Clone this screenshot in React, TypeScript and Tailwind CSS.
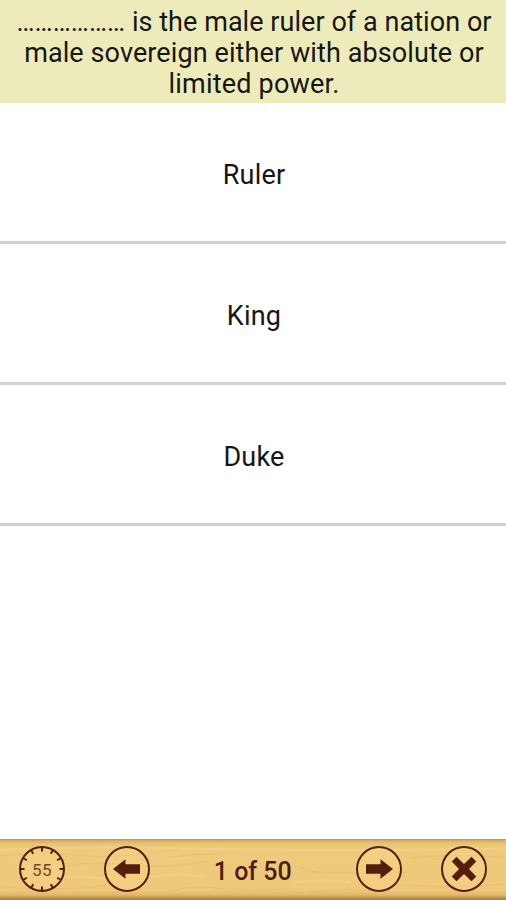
import type { ReactNode } from "react";

const question = [
  { text: "……………… is the male ruler of a nation or", spacing: "tracking-[0.05px]" },
  { text: "male sovereign either with absolute or", spacing: "tracking-[0.1px]" },
  { text: "limited power.", spacing: "tracking-[0.2px]" },
];

const answers = ["Ruler", "King", "Duke"];

const ticks = Array.from({ length: 12 }, (_, i) => i * 30);

function RoundIcon({ label, children }: { label: string; children: ReactNode }) {
  return (
    <button aria-label={label} className="block h-[48px] w-[48px] shrink-0">
      <svg viewBox="0 0 48 48" className="block h-full w-full text-[#551e0c]" fill="currentColor">
        <circle cx="24" cy="24" r="22" fill="#f8d488" fillOpacity="0.45" stroke="currentColor" strokeWidth="2" />
        {children}
      </svg>
    </button>
  );
}

function WoodGrain() {
  return (
    <svg className="absolute inset-0 h-full w-full" viewBox="0 0 506 61" preserveAspectRatio="none" fill="none" aria-hidden="true">
      <g stroke="#e4a24f" strokeWidth="1.2" opacity="0.25">
        <path d="M0 17 Q40 12 75 16 T170 12" />
        <path d="M65 27 Q95 22 125 26 T210 22" />
        <path d="M170 18 Q200 14 225 15" />
        <path d="M298 27 Q310 34 330 34 T410 33" />
        <path d="M170 52 Q195 46 215 49 T300 50" />
        <path d="M310 53 Q350 48 385 53" />
        <path d="M410 19 Q450 15 506 18" />
        <path d="M395 46 Q450 50 506 45" />
        <path d="M0 48 Q50 52 105 47" />
      </g>
      <g stroke="#ffe3a0" strokeWidth="2" opacity="0.3">
        <path d="M0 11 Q80 7 170 9 T350 11 T506 9" />
        <path d="M60 39 Q80 36 105 40" />
        <path d="M150 38 Q180 33 205 38" />
        <path d="M295 43 Q320 40 350 43" />
      </g>
    </svg>
  );
}

export default function App() {
  return (
    <div className="flex h-[900px] w-[506px] flex-col overflow-hidden bg-white font-[Roboto,sans-serif] text-[27px] text-[#161612]">
      <header className="h-[103px] shrink-0 bg-[#eeebba] pt-[7px] text-center leading-[31px]">
        {question.map((line) => (
          <div key={line.text} className={`whitespace-nowrap pl-[2px] ${line.spacing}`}>{line.text}</div>
        ))}
      </header>
      <main className="flex-1">
        {answers.map((answer) => (
          <button key={answer} className="flex h-[141px] w-full items-center justify-center border-b-[3px] border-[#dacfc7] pt-[6px] pl-[2px] tracking-[0.2px]">
            {answer}
          </button>
        ))}
      </main>
      <footer className="relative h-[61px] shrink-0 bg-[linear-gradient(to_bottom,#b99352_0px,#dab268_2px,#ebc576_5px,#efca7c_12px,#efc97a_51px,#e2b76a_56px,#bc9250_59px,#a37b40_61px)]">
        <WoodGrain />
        <div className="relative flex h-[59px] items-center pr-[18px] pl-[18px] text-[#551e0c]">
          <RoundIcon label="Time left">
            {ticks.map((a) => (
              <path key={a} d="M24 2V6.5" stroke="currentColor" strokeWidth="2" transform={`rotate(${a} 24 24)`} />
            ))}
            <text x="24" y="31" textAnchor="middle" fontSize="17" letterSpacing="0.4" fill="#74482a" className="font-[Roboto,sans-serif]">55</text>
          </RoundIcon>
          <div className="ml-[36.5px] flex">
            <RoundIcon label="Previous">
              <path d="M10 24 22.5 14.2V19.3H37V28.7H22.5V33.8Z" />
            </RoundIcon>
          </div>
          <div className="flex-1 pt-[6px] text-center text-[25px] font-medium text-[#4d1d13]">1 of 50</div>
          <RoundIcon label="Next">
            <path d="M38 24 25.5 14.2V19.3H11V28.7H25.5V33.8Z" />
          </RoundIcon>
          <div className="ml-[37px] flex">
            <RoundIcon label="Close">
              <path d="M16.5 11.7 24 19 31.5 11.7 36.3 16.5 29 24 36.3 31.5 31.5 36.3 24 29 16.5 36.3 11.7 31.5 19 24 11.7 16.5Z" />
            </RoundIcon>
          </div>
        </div>
      </footer>
    </div>
  );
}
